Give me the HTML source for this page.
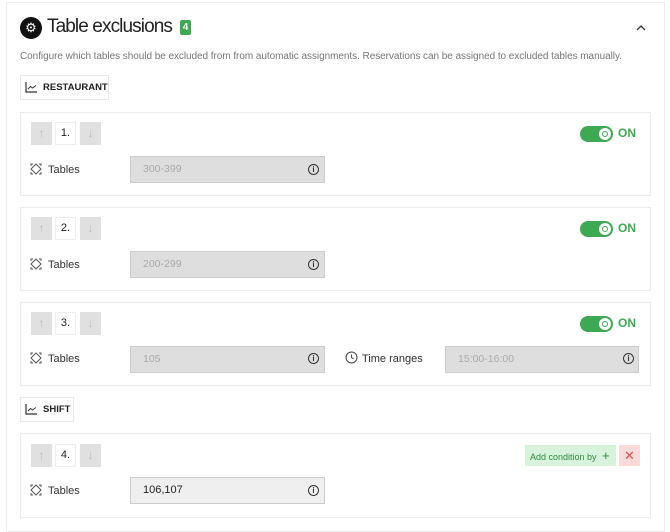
<!DOCTYPE html>
<html><head><style>
*{box-sizing:border-box;margin:0;padding:0}
body{width:670px;height:522px;background:#fff;font-family:"Liberation Sans",sans-serif;position:relative;overflow:hidden;color:#222}
.a{position:absolute}
.panel{left:6px;top:2px;width:659px;height:530px;border:1px solid #eee}
.card{left:20px;width:631px;border:1px solid #ececec;background:#fff}
.arr{width:21px;height:23px;background:#e0e0e0;color:#bbb;font-size:12px;text-align:center;line-height:23px}
.num{width:21px;height:23px;border:1px solid #eee;font-size:11px;text-align:center;line-height:21px}
.lbl{font-size:11px;color:#333;margin-top:1px}
.inp{height:27px;background:#dedede;border:1px solid #ccc;font-size:10.5px;color:#aaa;padding-left:12px;line-height:25px}
.info{width:11px;height:11px;border:1px solid #333;border-radius:50%;font-size:8px;line-height:9px;text-align:center;color:#333;font-weight:bold}
.tog{width:33px;height:16px;background:#3daa53;border-radius:8px}
.tog i{position:absolute;right:2px;top:2px;width:12px;height:12px;border-radius:50%;background:#fff}
.tog i:after{content:"";position:absolute;left:3px;top:3px;width:6px;height:6px;border-radius:50%;border:1px solid #3daa53;box-sizing:border-box}
.on{font-size:12px;font-weight:bold;color:#3daa53}
.btn{border:1px solid #e8e8e8;height:25px;font-size:9.5px;font-weight:bold;line-height:23px;padding-left:22px;color:#222}
</style></head><body>
<div class="a panel"></div>
<div class="a" style="left:20px;top:17px;width:22px;height:22px;border-radius:50%;background:#111;color:#fff;font-size:13px;text-align:center;line-height:22px">⚙</div>
<div class="a" style="left:47px;top:16px;font-size:19px;color:#222;letter-spacing:-0.9px;white-space:nowrap">Table exclusions</div>
<div class="a" style="left:180px;top:20px;width:11px;height:15px;background:#3daa53;color:#fff;font-size:10px;font-weight:bold;text-align:center;line-height:15px;border-radius:2px">4</div>
<svg class="a" style="left:636px;top:24px" width="10" height="7"><path d="M1 6 L5 2 L9 6" stroke="#333" fill="none" stroke-width="1.3"/></svg>
<div class="a" style="left:20px;top:51px;font-size:10px;color:#777;white-space:nowrap;letter-spacing:-0.05px">Configure which tables should be excluded from from automatic assignments. Reservations can be assigned to excluded tables manually.</div>

<svg width="0" height="0" style="position:absolute"><defs>
<g id="ch"><path d="M1 1 V11 H12" stroke="#333" fill="none" stroke-width="1.2"/><path d="M3 8 L5.5 5.5 L7.5 7 L11 4.5" stroke="#333" fill="none" stroke-width="1"/></g>
<g id="tb"><path d="M6 1 L11 6 L6 11 L1 6 Z" stroke="#555" fill="none" stroke-width="1"/><path d="M1 3 V1 H3 M9 1 H11 V3 M11 9 V11 H9 M3 11 H1 V9" stroke="#555" fill="none" stroke-width="1"/></g>
</defs></svg>

<div class="a btn" style="left:20px;top:75px;width:89px">RESTAURANT</div>
<svg class="a" style="left:25px;top:81px" width="13" height="13"><use href="#ch"/></svg>

<div class="a card" style="top:112px;height:84px"></div>
<div class="a card" style="top:207px;height:84px"></div>
<div class="a card" style="top:302px;height:84px"></div>
<div class="a btn" style="left:20px;top:397px;width:54px">SHIFT</div>
<svg class="a" style="left:25px;top:403px" width="13" height="13"><use href="#ch"/></svg>
<div class="a card" style="top:433px;height:85px"></div>

<div class="a arr" style="left:31px;top:122px">↑</div><div class="a num" style="left:55px;top:122px">1.</div><div class="a arr" style="left:80px;top:122px">↓</div>
<svg class="a" style="left:30px;top:163px" width="13" height="13"><use href="#tb"/></svg><div class="a lbl" style="left:48px;top:163px">Tables</div>
<div class="a inp" style="left:130px;top:156px;width:195px">300-399</div><div class="a info" style="left:308px;top:164px">i</div>
<div class="a tog" style="left:580px;top:126px"><i></i></div><div class="a on" style="left:618px;top:126px">ON</div>

<div class="a arr" style="left:31px;top:217px">↑</div><div class="a num" style="left:55px;top:217px">2.</div><div class="a arr" style="left:80px;top:217px">↓</div>
<svg class="a" style="left:30px;top:258px" width="13" height="13"><use href="#tb"/></svg><div class="a lbl" style="left:48px;top:258px">Tables</div>
<div class="a inp" style="left:130px;top:251px;width:195px">200-299</div><div class="a info" style="left:308px;top:259px">i</div>
<div class="a tog" style="left:580px;top:221px"><i></i></div><div class="a on" style="left:618px;top:221px">ON</div>

<div class="a arr" style="left:31px;top:312px">↑</div><div class="a num" style="left:55px;top:312px">3.</div><div class="a arr" style="left:80px;top:312px">↓</div>
<svg class="a" style="left:30px;top:352px" width="13" height="13"><use href="#tb"/></svg><div class="a lbl" style="left:48px;top:352px">Tables</div>
<div class="a inp" style="left:130px;top:346px;width:195px">105</div><div class="a info" style="left:308px;top:353px">i</div>
<svg class="a" style="left:345px;top:351px" width="13" height="13"><circle cx="6.5" cy="6.5" r="5.5" stroke="#444" fill="none"/><path d="M6.5 3.5 V6.5 L8.5 8" stroke="#444" fill="none"/></svg>
<div class="a lbl" style="left:362px;top:352px">Time ranges</div>
<div class="a inp" style="left:445px;top:346px;width:194px">15:00-16:00</div><div class="a info" style="left:623px;top:353px">i</div>
<div class="a tog" style="left:580px;top:316px"><i></i></div><div class="a on" style="left:618px;top:316px">ON</div>

<div class="a arr" style="left:31px;top:444px">↑</div><div class="a num" style="left:55px;top:444px">4.</div><div class="a arr" style="left:80px;top:444px">↓</div>
<svg class="a" style="left:30px;top:484px" width="13" height="13"><use href="#tb"/></svg><div class="a lbl" style="left:48px;top:484px">Tables</div>
<div class="a inp" style="left:130px;top:477px;width:195px;background:#efefef;color:#222;font-size:11px">106,107</div><div class="a info" style="left:308px;top:485px">i</div>
<div class="a" style="left:525px;top:445px;width:91px;height:21px;background:#d8f3dc;color:#2f8a43;font-size:9px;line-height:21px;padding-left:5px;white-space:nowrap">Add condition by <span style="font-size:13px;margin-left:3px">+</span></div>
<div class="a" style="left:619px;top:445px;width:21px;height:21px;background:#fadada;color:#e05050;font-size:13px;line-height:21px;text-align:center">✕</div>
</body></html>
